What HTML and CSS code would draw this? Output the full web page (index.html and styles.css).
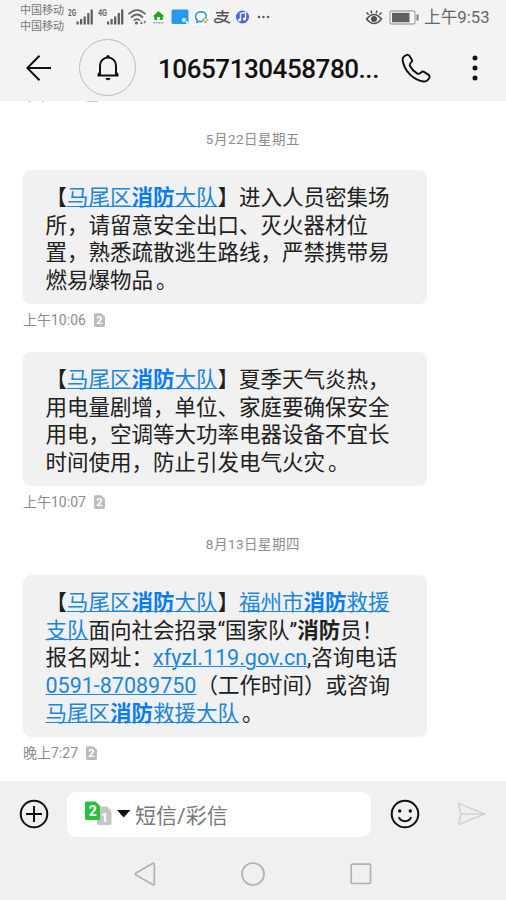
FILE: index.html
```html
<!DOCTYPE html>
<html lang="zh-CN">
<head>
<meta charset="utf-8">
<title>短信</title>
<link rel="stylesheet" href="styles.css">
</head>
<body>
<div class="phone">
  <header class="top">
    <div class="status">
      <div class="carriers"><span>中国移动</span><span>中国移动</span></div>
      <svg class="status-icons" width="208" height="34" viewBox="0 0 208 34">
        <g class="net"><text x="0" y="16" textLength="8" lengthAdjust="spacingAndGlyphs">2G</text><text x="30" y="16" textLength="9" lengthAdjust="spacingAndGlyphs">4G</text></g>
        <g fill="#5c5c5c">
          <path d="M8.500 21.500h2.200v3h-2.200zM12 19h2.200v5.500H12zM15.600 16.500h2.200v8h-2.200zM19.200 13h2.200v11.500h-2.200zM22.600 9.500h2.200v15h-2.200z"/>
          <path d="M39 21.500h2.200v3H39zM42.500 19h2.200v5.500h-2.200zM46.100 16.500h2.200v8h-2.200zM49.700 13h2.200v11.500h-2.200zM53.100 9.500h2.200v15h-2.200z"/>
        </g>
        <g fill="none" stroke="#666" stroke-width="1.800">
          <path d="M60.500 14.200Q69 6 77.500 14.200M63 17.500Q69 11.500 75 17.500M66 20.600Q69 17.700 72 20.600"/>
        </g>
        <circle cx="68.500" cy="23" r="1.600" fill="#666"/>
        <path d="M72 24l1.500-3 1.500 3zM75.500 21l1.300 3 1.300-3z" fill="#777"/>
        <rect x="84" y="9" width="14" height="15" fill="#fafafa"/>
        <path d="M90.500 11l6 5.600h-1.700V20h-2.700v-3h-3v3h-2.700v-3.400h-1.700z" fill="#22a51e"/>
        <path d="M85 22.800h11" stroke="#86bd82" stroke-width="1.500" stroke-dasharray="2 .6"/>
        <rect x="103.500" y="9.500" width="17" height="14.500" rx="1.500" fill="#259bee"/>
        <circle cx="116" cy="20" r="2" fill="#fff"/><circle cx="119" cy="22.500" r="1.200" fill="#fff"/>
        <rect x="126" y="9" width="15" height="16" fill="#fcfcfc"/>
        <path d="M135 21.200q-2 .6-4 0l-2.200 1 .4-2.200q-2-1.600-1.700-4 .8-4.200 5.500-4.300 5 .1 5.500 4.500" fill="none" stroke="#2596dc" stroke-width="1.500"/>
        <circle cx="137.800" cy="17.500" r="1.200" fill="#249ce0"/><circle cx="139.500" cy="20" r="1.200" fill="#f3b521"/><circle cx="137.500" cy="22" r="1.200" fill="#f08c37"/><circle cx="135.500" cy="19.800" r="1.200" fill="#6cc432"/>
        <g fill="none" stroke="#555" stroke-width="1.600"><path d="M148 12.800h13M154.500 10v5.800M149 15.800h10.300Q156.500 23 149 22.500q-3-.4-2-2.700 1.500-2 5-.8 4 1.500 10 4"/></g>
        <circle cx="174.500" cy="17" r="6.500" fill="#5063d7"/>
        <path d="M172.500 20v-6.500l5-1.200v6.500" fill="none" stroke="#e9edff" stroke-width="1.500"/><circle cx="171.500" cy="20" r="1.500" fill="#fff"/><circle cx="176.400" cy="18.900" r="1.500" fill="#fff"/>
        <g fill="#555"><circle cx="191" cy="17" r="1.200"/><circle cx="195.500" cy="17" r="1.200"/><circle cx="200" cy="17" r="1.200"/></g>
      </svg>
      <svg class="eye-battery" width="56" height="34" viewBox="0 0 56 34">
        <g fill="none" stroke="#4f4f4f" stroke-width="1.500"><path d="M1.500 19Q9 10 16.500 19Q9 28 1.500 19zM1.500 12.500l2.200 2.300M6 10.500l.8 2.700M12 10.500l-.8 2.700M16.500 12.500l-2.200 2.300"/></g>
        <circle cx="9" cy="19" r="3" fill="#4f4f4f"/>
        <rect x="25" y="11" width="25" height="13" rx="2" fill="#f8f8f8" stroke="#aaa" stroke-width="1.300"/>
        <rect x="27" y="12.800" width="17.500" height="9.500" fill="#606060"/><path d="M51.500 14.500h2v6h-2z" fill="#777"/>
      </svg>
      <span class="clock">上午9:53</span>
    </div>
    <div class="titlebar">
      <svg class="back" width="26" height="26" viewBox="0 0 26 26" fill="none" stroke="#111" stroke-width="2"><path d="M25 13H1.500M13.500.8L1.300 13l12.200 12.200"/></svg>
      <div class="bell"><svg width="24" height="28" viewBox="0 0 24 28"><path d="M1.500 21.500h21M4 21v-9.500a8 8 0 0 1 16 0V21M2 21l2.300-3M22 21l-2.300-3" fill="none" stroke="#111" stroke-width="2"/><path d="M10 3.500Q10 1 12 1t2 2.500zM9.500 24h5q-.5 2.200-2.500 2.200T9.500 24z" fill="#111"/></svg></div>
      <h1>10657130458780...</h1>
      <svg class="call" width="30" height="30" viewBox="0 0 30 30" fill="none" stroke="#111" stroke-width="1.900" stroke-linejoin="round"><path d="M6 1.800Q1.500 3 1.600 7C3 17.500 12 27 22.500 28.500c3 .2 5-2 6-4.200.5-1.500-.2-2-1.200-2.700l-4.300-2.700c-1.200-.8-2-.4-2.800.5-1.500 1.700-2.400 2.100-4.200 1C13 18.500 10.500 16 9 13c-.8-1.500 0-2.500 1.200-3.600 1-.9 1.200-1.700.5-2.800L8.400 2.800Q7.300 1.300 6 1.800z"/></svg>
      <svg class="more" width="6" height="28" viewBox="0 0 6 28"><circle cx="3" cy="4" r="2.500"/><circle cx="3" cy="14" r="2.500"/><circle cx="3" cy="24" r="2.500"/></svg>
    </div>
  </header>
  <main class="chat">
    <svg class="scrolled" width="76" height="2" viewBox="0 0 76 2" fill="#ccc"><path d="M0 0h3v1H0zM14 0h2v1h-2zM59 0h11v1H59z"/></svg>
    <p class="date">5月22日星期五</p>
    <section class="message">
      <p class="bubble">【<a>马尾区<b>消防</b>大队</a>】进入人员密集场<br>所，请留意安全出口、灭火器材位<br>置，熟悉疏散逃生路线，严禁携带易<br>燃易爆物品<span class="stop">。</span></p>
      <p class="meta">上午10:06<svg class="sim" width="11" height="14" viewBox="0 0 12 15"><path d="M0 1.500Q0 0 1.500 0H8l4 4v9.500q0 1.500-1.500 1.500h-9Q0 15 0 13.500z"/><text x="6" y="12" text-anchor="middle">2</text></svg></p>
    </section>
    <section class="message">
      <p class="bubble">【<a>马尾区<b>消防</b>大队</a>】夏季天气炎热，<br>用电量剧增，单位、家庭要确保安全<br>用电，空调等大功率电器设备不宜长<br>时间使用，防止引发电气火灾<span class="stop">。</span></p>
      <p class="meta">上午10:07<svg class="sim" width="11" height="14" viewBox="0 0 12 15"><path d="M0 1.500Q0 0 1.500 0H8l4 4v9.500q0 1.500-1.500 1.500h-9Q0 15 0 13.500z"/><text x="6" y="12" text-anchor="middle">2</text></svg></p>
    </section>
    <p class="date later">8月13日星期四</p>
    <section class="message">
      <p class="bubble">【<a>马尾区<b>消防</b>大队</a>】<a>福州市<b>消防</b>救援</a><br><a>支队</a>面向社会招录“国家队”<b>消防</b>员！<br>报名网址：<a>xfyzl.119.gov.cn</a>,咨询电话<br><a>0591-87089750</a>（工作时间）或咨询<br><a>马尾区<b>消防</b>救援大队</a><span class="stop">。</span></p>
      <p class="meta">晚上7:27<svg class="sim" width="11" height="14" viewBox="0 0 12 15"><path d="M0 1.500Q0 0 1.500 0H8l4 4v9.500q0 1.500-1.500 1.500h-9Q0 15 0 13.500z"/><text x="6" y="12" text-anchor="middle">2</text></svg></p>
    </section>
  </main>
  <footer class="bottom">
    <div class="composer">
      <svg width="30" height="30" viewBox="0 0 30 30" fill="none" stroke="#111" stroke-width="2"><circle cx="15" cy="15" r="13.300"/><path d="M7 15h16M15 7v16"/></svg>
      <div class="input">
        <svg width="46" height="26" viewBox="0 0 46 26"><path d="M12 7q0-1.500 1.500-1.500H22l4.500 4.500v12.500q0 1.500-1.500 1.500H13.500q-1.500 0-1.500-1.500z" fill="#c6c6c6"/><path d="M0 2Q0 .5 1.500.5h9l4.500 4.300V17.500q0 1.500-1.500 1.500h-12Q0 19 0 17.500z" fill="#27c23b"/><text class="sim-green" x="7.700" y="15.300" text-anchor="middle">2</text><text class="sim-grey" x="19.500" y="20.500" text-anchor="middle">1</text><path d="M32 9h13.500l-6.800 7.500z" fill="#111"/></svg>
        <span>短信/彩信</span>
      </div>
      <svg class="smile" width="30" height="30" viewBox="0 0 30 30" fill="none" stroke="#111" stroke-width="2"><circle cx="15" cy="15" r="13.300"/><path d="M8.800 18.200q1.700 4 6.200 4t6.200-4"/><circle cx="9.700" cy="12" r="1.700" fill="#111" stroke="none"/><circle cx="20.300" cy="12" r="1.700" fill="#111" stroke="none"/></svg>
      <svg class="send" width="30" height="24" viewBox="0 0 30 24" fill="none" stroke="#d3d3d3" stroke-width="1.600" stroke-linejoin="round"><path d="M1.500 1.500L28 12 1.500 22.500 4 12zM4 12h23"/></svg>
    </div>
    <nav class="nav">
      <svg width="22" height="24" viewBox="0 0 22 24"><path d="M19 1.300L2 11q-1.500 1 0 2l17 9.700q1.300.5 1.300-1V2.300q0-1.500-1.300-1z"/></svg>
      <svg width="24" height="24" viewBox="0 0 24 24"><circle cx="12" cy="12" r="11"/></svg>
      <svg width="22" height="22" viewBox="0 0 22 22"><rect x="1.200" y="1.200" width="19.300" height="19.300" rx="1"/></svg>
    </nav>
  </footer>
</div>
</body>
</html>
```
FILE: styles.css
```css
* { box-sizing: border-box; }
body {
  margin: 0;
  font-family: Roboto, "Noto Sans CJK SC", sans-serif;
  text-spacing-trim: space-all;
}
p, h1 { margin: 0; }
svg { display: block; flex: none; }
.phone { width: 506px; height: 900px; display: flex; flex-direction: column; background: #fff; overflow: hidden; }

.top { height: 101px; background: #f3f3f3; flex: none; }
.status { height: 34px; display: flex; align-items: center; padding-left: 20px; white-space: nowrap; }
.carriers { width: 47px; display: flex; flex-direction: column; padding-top: 3px; font-size: 11px; line-height: 15.500px; color: #777; }
.status-icons { margin-left: 1px; }
.net { font-size: 9px; font-weight: 700; fill: #666; }
.eye-battery { margin-left: 89px; }
.clock { margin-left: 3px; font-size: 16.700px; line-height: 34px; color: #666; padding-top: 2px; }

.titlebar { height: 67px; display: flex; align-items: center; padding-left: 26px; }
.bell { width: 57px; height: 57px; margin-left: 27px; border: 1.500px solid #bbb; border-radius: 50%; display: flex; align-items: center; justify-content: center; }
.titlebar h1 { width: 221px; margin-left: 22px; padding-top: 2px; font-size: 26px; font-weight: 500; letter-spacing: -0.450px; line-height: 34px; color: #111; white-space: nowrap; }
.call { margin-left: 22px; }
.more { margin-left: 41px; fill: #111; }

.chat { height: 680px; flex: none; padding: 0 0 0 23px; }
.scrolled { margin-left: 5px; }
.date { height: 20px; margin: 26px 23px 21px 0; text-align: center; font-size: 13.500px; letter-spacing: 0.500px; line-height: 20px; color: #8c8c8c; }
.message { height: 182px; }
.bubble {
  width: 404px;
  padding: 14px 0 9.800px 22.500px;
  border-radius: 8px;
  background: #f1f1f1;
  color: #202020;
  font-size: 21.500px;
  line-height: 27.670px;
  white-space: nowrap;
}
.bubble a { color: #1a86dc; text-decoration: underline; text-decoration-thickness: 1px; text-underline-offset: 1px; }
.bubble b { font-weight: 700; }
.bubble a b { color: #0a7cf2; }
.stop { padding-left: 3px; }
.meta { display: flex; align-items: center; gap: 8px; height: 20px; margin-top: 6px; font-size: 14px; line-height: 20px; color: #8c8c8c; }
.sim { fill: #bcbcbc; }
.sim text { fill: #fff; font-size: 12px; font-weight: 700; }
.date.later { margin-top: 0; }

.bottom { height: 119px; background: #f0f0f0; }
.composer { height: 66px; display: flex; align-items: center; padding-left: 19px; }
.input { width: 304px; height: 45px; margin-left: 18px; padding-left: 18px; border-radius: 9px; background: #fff; display: flex; align-items: center; gap: 4px; font-size: 21px; color: #777; }
.sim-green { fill: #fff; font-size: 14px; font-weight: 700; }
.sim-grey { fill: #fff; font-size: 13px; font-weight: 700; }
.smile { margin-left: 19px; }
.send { margin-left: 37px; }
.nav { height: 53px; padding: 1px 134px 0; display: flex; justify-content: space-between; align-items: center; }
.nav svg { fill: none; stroke: #b1b1b1; stroke-width: 1.700; }
```
